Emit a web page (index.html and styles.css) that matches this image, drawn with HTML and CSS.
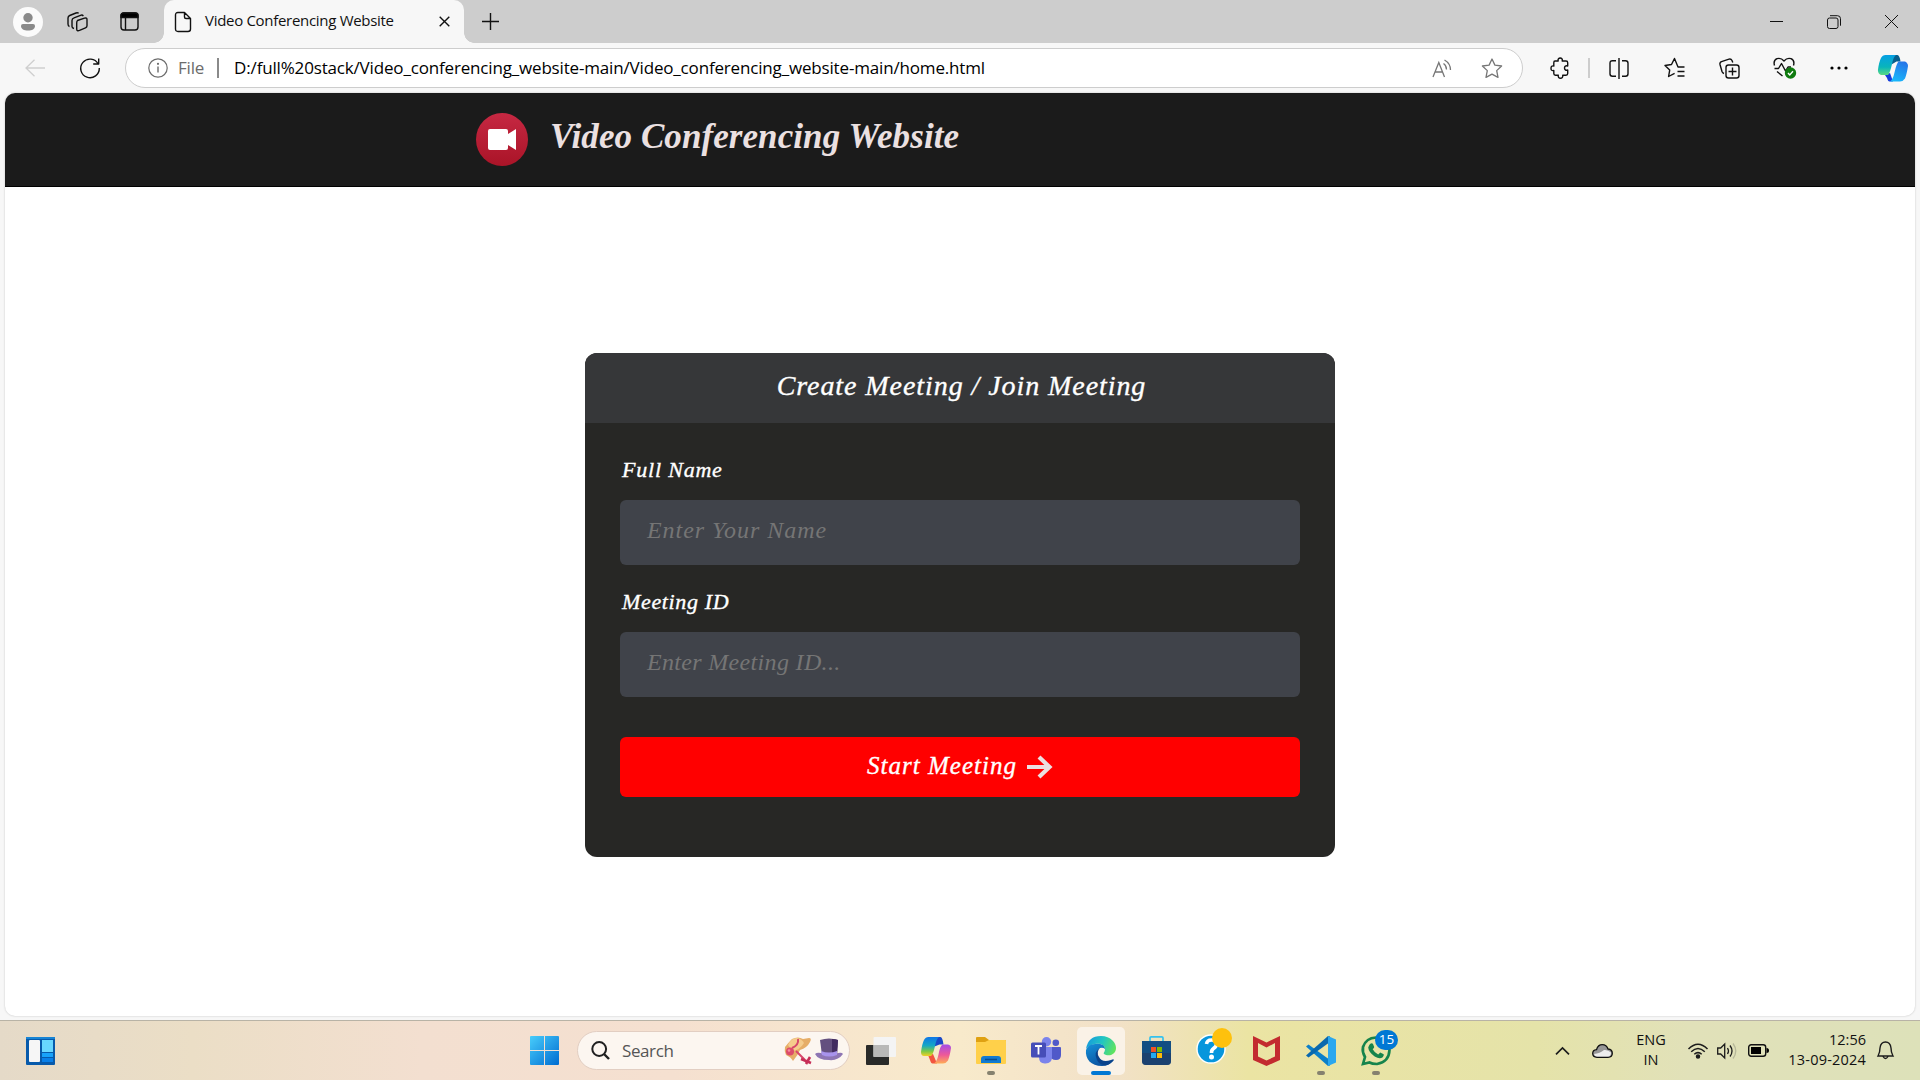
FILE: index.html
```html
<!DOCTYPE html>
<html lang="en">
<head>
<meta charset="utf-8">
<title>Video Conferencing Website</title>
<link rel="stylesheet" href="styles.css">
</head>
<body>
<div class="desktop">
  <div class="tabstrip">
    <div class="cell profile"><svg width="30" height="30" viewBox="0 0 30 30"><circle cx="15" cy="15" r="15" fill="#fbfbfb"/><circle cx="15" cy="10.7" r="4.7" fill="#8a8a8a"/><path d="M10 17h10q2 0 2 2c0 3-3 4.600-7 4.600s-7-1.600-7-4.600q0-2 2-2z" fill="#8a8a8a"/></svg></div>
    <div class="cell spaces"><svg width="22" height="22" viewBox="0 0 22 22" class="line"><path d="M10.500 9.500 17.500 7.200q2.500-.7 2.500 1.500v6q0 1.500-1.500 2.100l-6 2.600q-2.800 1-2.800-1.500v-6q0-1.700.8-2.400z"/><path d="M7 17.500q-2-.4-2-2V9.500q0-2 2-2.700l6.500-2.500q2-.7 2.800.8"/><path d="M2.500 15.500Q1 15 1 13V7q0-1.800 1.700-2.500L9 2q1.800-.7 2.600.4"/></svg></div>
    <div class="cell actions"><svg width="19" height="19" viewBox="0 0 19 19" class="line"><rect x="1" y="1" width="17" height="17" rx="3"/><path d="M1 5.500V3.500Q1 1 3.500 1h12Q18 1 18 3.500v2z" fill="#000"/><path d="M5.500 6v12"/></svg></div>
    <div class="tab">
      <svg width="18" height="22" viewBox="0 0 18 22" class="line"><path d="M4 1.500h6.500L16.500 7.500V18q0 2.500-2.500 2.500H4Q1.500 20.500 1.500 18V4Q1.500 1.500 4 1.500zM10.500 1.500v4.500q0 1.500 1.500 1.500h4.500"/></svg>
      <span class="tab-title">Video Conferencing Website</span>
      <svg width="11" height="11" viewBox="0 0 11 11" class="line"><path d="M.7.700 10.300 10.300M10.300.7.700 10.300"/></svg>
    </div>
    <div class="cell plus"><svg width="17" height="17" viewBox="0 0 17 17" class="line"><path d="M8.500 0v17M0 8.500h17"/></svg></div>
    <div class="window-buttons">
      <div class="cell"><svg width="13" height="13" viewBox="0 0 13 13" class="thin"><path d="M0 6.500h13"/></svg></div>
      <div class="cell"><svg width="14" height="14" viewBox="0 0 14 14" class="thin"><rect x=".5" y="3" width="10.500" height="10.500" rx="2"/><path d="M3 .7h7.500q3 0 3 3v7"/></svg></div>
      <div class="cell"><svg width="13" height="13" viewBox="0 0 13 13" class="thin"><path d="M0 0 13 13M13 0 0 13"/></svg></div>
    </div>
  </div>

  <div class="toolbar">
    <div class="cell back"><svg width="20" height="18" viewBox="0 0 20 18"><path d="M9.500.7 1 9l8.500 8.300M1 9h19" fill="none" stroke="#cfcfcf" stroke-width="1.300"/></svg></div>
    <div class="cell reload"><svg width="22" height="22" viewBox="0 0 22 22" class="line"><path d="M19.200 7A9.300 9.300 0 1 0 20.300 11M19.700 1.500V7h-5.500"/></svg></div>
    <div class="address">
      <svg width="20" height="20" viewBox="0 0 20 20" fill="none" stroke="#6c6c6c" stroke-width="1.200"><circle cx="10" cy="10" r="9.200"/><path d="M10 8.500v6" stroke-width="1.400"/><circle cx="10" cy="5.800" r=".5" fill="#6c6c6c"/></svg>
      <span class="scheme">File</span><span class="divider"></span>
      <span class="url">D:/full%20stack/Video_conferencing_website-main/Video_conferencing_website-main/home.html</span>
      <svg class="read" width="20" height="19" viewBox="0 0 20 19" fill="none" stroke="#767676" stroke-width="1.300"><path d="M1 18 6.800 3.500 12.500 18M3 13h7.500M11.500 4.500q3 2 3 6M12.500 1q6 3.500 6 10"/></svg>
      <svg class="star" width="22" height="21" viewBox="0 0 22 21" fill="none" stroke="#767676" stroke-width="1.300" stroke-linejoin="round"><path d="M11 1 13.900 7.100 20.600 8 15.700 12.600 17 19.400 11 16.100 5 19.400 6.300 12.600 1.400 8 8.100 7.100z"/></svg>
    </div>
    <div class="cell tool ext"><svg width="20" height="22" viewBox="0 0 20 22" class="line"><path d="M5 4h3.200C7.500 1.800 9 1 10.200 1s2.700.8 2 3H16q1.700 0 1.700 1.700V9c-2-.7-3.200.5-3.200 2s1.200 2.700 3.200 2v3.500q0 1.700-1.700 1.700h-3.300c.5 2-.8 3-2.200 3s-2.700-1-2.200-3H5.500q-1.700 0-1.700-1.700V13.500C1.500 14 1 12.700 1 11.200s1-2.700 2.800-2.200V5.700Q3.800 4 5 4z"/></svg></div>
    <span class="tool-divider"></span>
    <div class="cell tool"><svg width="20" height="21" viewBox="0 0 20 21" class="line"><path d="M10 0v21M7 2.700H3.500q-2.500 0-2.500 2.500v10.500q0 2.500 2.500 2.500H7M13 2.700h3.500q2.500 0 2.500 2.500v10.500q0 2.500-2.500 2.500H13"/></svg></div>
    <div class="cell tool"><svg width="21" height="20" viewBox="0 0 21 20" class="line"><path d="M20.500 9.500H14L10.500 1 7.500 7 1 8l4.700 4.600L4.600 19l6-3.200M13.500 14H20.500M13.500 18.500H20.500" transform="translate(0 -.5)"/></svg></div>
    <div class="cell tool"><svg width="21" height="21" viewBox="0 0 21 21" class="line"><rect x="7" y="7" width="13" height="13" rx="2.500"/><path d="M13.500 9.500v8M9.500 13.500h8M5 15.500Q3.500 15 3 13.500L1 6.500Q.5 4.500 2.500 3.700L10 1.200q2-.6 3 1.300l.8 2"/></svg></div>
    <div class="cell tool"><svg width="22" height="22" viewBox="0 0 22 22" class="line"><path d="M1.500 8.500Q0 3.500 4 1.700 8 .5 11 4q3-3.500 7-2.300 4 1.800 2.500 6.800M1.500 11.500h4l3-5 4 7.500 2.500-4h3M4 14.500 9.500 19"/><circle cx="17.500" cy="16" r="5.700" fill="#0f7b0f" stroke="none"/><path d="m15 16 1.800 1.900 3.200-3.600" stroke="#fff"/></svg></div>
    <div class="cell tool"><svg width="18" height="4" viewBox="0 0 18 4"><circle cx="2" cy="2" r="1.600"/><circle cx="9" cy="2" r="1.600"/><circle cx="16" cy="2" r="1.600"/></svg></div>
    <div class="cell copilot"><svg width="30" height="27" viewBox="0 0 30 27"><defs><linearGradient id="ca" x1="0" y1="0" x2="0" y2="1"><stop offset="0" stop-color="#069fe4"/><stop offset=".6" stop-color="#08b5bb"/><stop offset="1" stop-color="#5ada82"/></linearGradient><linearGradient id="cb" x1=".7" y1="0" x2=".3" y2="1"><stop offset="0" stop-color="#2575e8"/><stop offset="1" stop-color="#18b9fb"/></linearGradient></defs><path d="M14 0h5.500q2 0 3 6.500h-4l-5 3z" fill="#075e8c"/><path d="M7 20l5-2 3 8.500h-3.500Q10 26.500 9 23z" fill="#153ddb"/><path d="M7.500 0H18Q15.500 1.500 14 9q-2 9-4 11H3Q0 19-.1 15 1 7 3 3 4.500 0 7.500 0z" fill="url(#ca)"/><path d="M22 26.500H12q3-2 4.500-9Q18.500 8.500 20.500 6.500H27Q30 8 30 11q-1.200 8-3 12.500Q25 26.500 22 26.500z" fill="url(#cb)"/></svg></div>
  </div>

  <div class="viewport">
    <header class="site-header">
      <svg class="logo" width="52" height="53" viewBox="0 0 52 53"><defs><linearGradient id="lg" x1="0" y1="0" x2="0" y2="1"><stop offset="0" stop-color="#c62842"/><stop offset="1" stop-color="#aa1428"/></linearGradient></defs><ellipse cx="26" cy="26.500" rx="26" ry="26.500" fill="url(#lg)"/><path d="M14 16h16q2 0 2 2v3l8-5v21l-8-5v3q0 2-2 2H14q-2 0-2-2V18q0-2 2-2z" fill="#fff"/></svg>
      <h1 class="site-title">Video Conferencing Website</h1>
    </header>
    <main class="stage">
      <section class="card">
        <h2 class="card-head">Create Meeting / Join Meeting</h2>
        <form class="form">
          <label class="label">Full Name</label>
          <div class="field">Enter Your Name</div>
          <label class="label label-id">Meeting ID</label>
          <div class="field field-id">Enter Meeting ID...</div>
          <div class="submit"><span>Start Meeting</span><svg width="26" height="24" viewBox="0 0 26 24" fill="none" stroke="#ebe0e1" stroke-width="4.200"><path d="M0 12h22M12 2l10.500 10L12 22"/></svg></div>
        </form>
      </section>
    </main>
  </div>

  <div class="taskbar">
    <div class="task widgets"><svg width="29" height="28" viewBox="0 0 29 28"><rect width="29" height="28" rx="1" fill="#075aab"/><path d="M0 0h29v2H0z" fill="#1684d5"/><rect x="3" y="3" width="11" height="22" rx="1" fill="#f6f6f6"/><path d="M16 3h11v12H16z" fill="#68d7ff"/><path d="M16 16h11v4H16z" fill="#18a2fa"/><path d="M16 21h11v4H16z" fill="#087fe8"/></svg></div>
    <div class="task start"><svg width="29" height="29" viewBox="0 0 29 29"><defs><linearGradient id="wn" x1="0" y1="0" x2="1" y2="1"><stop offset="0" stop-color="#48cdfb"/><stop offset="1" stop-color="#006cd1"/></linearGradient></defs><path d="M1 0h13v14H0V1q0-1 1-1zM15 0h13q1 0 1 1v13H15zM0 15h14v14H1q-1 0-1-1zM15 15h14v13q0 1-1 1H15z" fill="url(#wn)"/></svg></div>
    <div class="search">
      <svg width="19" height="19" viewBox="0 0 19 19" fill="none" stroke="#202020" stroke-width="2"><circle cx="8.200" cy="8" r="6.900"/><path d="m13 13 5 5" stroke-width="2.400"/></svg>
      <span class="search-text">Search</span>
      <svg class="hats" width="58" height="28" viewBox="0 0 58 28"><path d="M0 10Q4 5 7 2q6-3 11 0l6-1q3 0 1 4-3 6-10 8-2 5-7 11-2-4-7-6-2-4-1-8z" fill="#e6ad67"/><path d="M3 8Q6 1 12 1q5 1 7 5-4 7-12 8z" fill="#f5cc8c"/><path d="M13 2q1 6-6 9M11 14l9 9" stroke="#d7476b" stroke-width="2" fill="none"/><circle cx="5" cy="14.500" r="4" fill="#dc4c6b"/><circle cx="4" cy="13.500" r="1.300" fill="#f58ea0"/><path d="m16 22 10 4M25 20l-4 7" stroke="#c72e57" stroke-width="2.600"/><path d="M35 3q9-3 18 0l-1 15q-8 3-15 0z" fill="#64507f"/><path d="M47 2q4 0 6 1l-1 15-5 1z" fill="#422c60"/><path d="M30 17q2-2 6-1 8 4 17 0 4-1 5 1-5 7-14 6-11 0-14-6z" fill="#8e76b4"/><path d="M36 14q8 3 16 0v4q-8 3-15 0z" fill="#a893ec"/></svg>
    </div>
    <div class="task"><svg width="30" height="28" viewBox="0 0 30 28"><rect y="8" width="23" height="20" rx="1" fill="#292a29"/><rect x="7.500" width="22.500" height="20" rx="1" fill="#f4f4f4"/><path d="M7.500 8H23v12H7.500z" fill="#b9b9b8"/></svg></div>
    <div class="task"><svg width="30" height="27" viewBox="0 0 30 27"><defs><linearGradient id="cc" x1="0" y1="0" x2="0" y2="1"><stop offset="0" stop-color="#0f76e8"/><stop offset=".45" stop-color="#16a7c4"/><stop offset=".75" stop-color="#7bc947"/><stop offset="1" stop-color="#f2cf25"/></linearGradient><linearGradient id="cd" x1="0" y1="0" x2="0" y2="1"><stop offset="0" stop-color="#a44be8"/><stop offset=".55" stop-color="#ee5998"/><stop offset="1" stop-color="#ffac55"/></linearGradient></defs><path d="M14 0h5.500q2 0 3 7.500h-4l-5 2z" fill="#1948c8"/><path d="M7 18l5-1 4 9.500h-4.500Q10 26.500 9 23z" fill="#f25540"/><path d="M7.500 0H18Q15.500 1.500 14 9q-2 9-4 10H3Q0 19 0 15 1 7 3 3 4.500 0 7.500 0z" fill="url(#cc)"/><path d="M22 26.500h-9q3-2 4.500-9Q19 9 21.500 7.500H27Q30 8 30 11q-1.200 8-3 12.500Q25 26.500 22 26.500z" fill="url(#cd)"/></svg></div>
    <div class="task running"><svg width="30" height="27" viewBox="0 0 30 27"><path d="M1 0h8l4 3h16q1 0 1 1v6H0V1q0-1 1-1z" fill="#dfa112"/><path d="M0 5h9l4-2h16q1 0 1 1v22q0 1-1 1H1q-1 0-1-1z" fill="#ffd04a"/><path d="M8 19h14q3 0 3 3v4H5v-4q0-3 3-3z" fill="#127bd1"/><path d="M9 22.500h12" stroke="#064e91" stroke-width="1.500"/></svg></div>
    <div class="task"><svg width="30" height="27" viewBox="0 0 30 27"><circle cx="15.500" cy="4.800" r="4.700" fill="#7b83eb"/><circle cx="24.800" cy="5.800" r="3.300" fill="#5059c9"/><path d="M18 10h11q1 0 1 1v7q0 5-5 5t-7-5z" fill="#5059c9"/><path d="M8 10h13v10q0 6-6.500 6.500T8 20z" fill="#7b83eb"/><rect y="5.500" width="15" height="15" rx="1.500" fill="#464eb8"/><path d="M4 9h7M7.500 9v8.500" stroke="#fff" stroke-width="1.800"/></svg></div>
    <div class="task active"><svg width="30" height="30" viewBox="0 0 30 30"><defs><linearGradient id="ea" x1="0" y1=".3" x2="1" y2=".6"><stop offset="0" stop-color="#169ade"/><stop offset=".5" stop-color="#22c6c1"/><stop offset="1" stop-color="#61e45c"/></linearGradient><linearGradient id="eb" x1="0" y1="0" x2=".6" y2="1"><stop offset="0" stop-color="#1592d9"/><stop offset="1" stop-color="#0b509e"/></linearGradient></defs><path d="M0 13Q2 0 15 0c10 0 15 7 15 12 0 7-8 9-12 6-1-1 1-2 1-5 0-4-5-6-10-5Q3 9 0 13z" fill="url(#ea)"/><path d="M0 14Q2 8 9 8c7-1 10 2 10 5q-2-2-5-1-5 3-2 10 3 8 15 2 2-1 0 1-4 5-11 5C5 30-1 23 0 14z" fill="url(#eb)"/><path d="M14 12q-7 4-3 12 3 6 10 5 3-1 6-4 2-3-2-1-9 3-12-3-3-5 1-9z" fill="#0a438b"/></svg></div>
    <div class="task"><svg width="29" height="29" viewBox="0 0 29 29"><path d="M8 7V2q0-1.200 1.200-1.200h10.600Q21 .8 21 2v5" fill="none" stroke="#35c2ee" stroke-width="1.700"/><path d="M0 5h29v20q0 4-4 4H4q-4 0-4-4z" fill="#124e83"/><path d="M0 17h29v8q0 4-4 4H4q-4 0-4-4z" fill="#1f3c66" opacity=".7"/><path d="M9 11h5v5H9z" fill="#f05224"/><path d="M15 11h5v5h-5z" fill="#7fba00"/><path d="M9 17h5v5H9z" fill="#24aaf0"/><path d="M15 17h5v5h-5z" fill="#ffba08"/></svg></div>
    <div class="task help"><svg width="38" height="38" viewBox="0 0 38 38"><circle cx="17" cy="22" r="14.700" fill="#fff"/><circle cx="17" cy="22" r="13.300" fill="#0796dc"/><path d="M12.500 17q.5-4 5-4 5 0 5 4 0 2.500-3 4.500-2.200 1.500-2 4.500" fill="none" stroke="#fff" stroke-width="3.600"/><circle cx="17.500" cy="30" r="2.500" fill="#fff"/><circle cx="28" cy="11" r="10" fill="#fec10d"/></svg></div>
    <div class="task"><svg width="27" height="30" viewBox="0 0 27 30"><path d="M0 0 13.500 6.500 27 0v24l-13.500 6L0 24zM5 7v13.500l8.500 4 8.500-4V7l-8.500 4.500z" fill="#c32b2f" fill-rule="evenodd"/></svg></div>
    <div class="task running"><svg width="30" height="30" viewBox="0 0 30 30"><path d="M0 10.500 2.500 8.500 24 24v5.500L22 30z" fill="#0b7fc9"/><path d="M0 19.500 2.500 21.500 24 6V.5L22 0z" fill="#0868ae"/><path d="M22 0 30 3.500v23L22 30z" fill="#2ba7ee"/></svg></div>
    <div class="task running chat"><svg width="30" height="30" viewBox="0 0 30 30"><path d="M2 28 4 21Q1 16 2 11 5 2 15 1.500 27 3 28.500 14 28 26 16 28 11 28 8.500 26.500z" fill="none" stroke="#16844c" stroke-width="2.700"/><path d="M9 8q2-1.500 3 0l1.200 3q0 1-1.500 2.300 2 3.800 5.500 5.200l2-2 3.500 1.800q.5 1-1 3-3 2.400-8-.8-6-4.200-6.500-9Q8 9 9 8z" fill="#16844c"/></svg><span class="badge">15</span></div>
    <div class="tray">
      <div class="cell chevron"><svg width="15" height="8" viewBox="0 0 15 8" fill="none" stroke="#1c1c1c" stroke-width="1.700"><path d="m1 7.300 6.500-6.300L14 7.300"/></svg></div>
      <div class="cell cloud"><svg width="21" height="14" viewBox="0 0 21 14"><path d="M5 13.300Q.7 13 .7 9.500T4.500 5.700Q6 .7 10.300.7T16 5q4.300.3 4.300 4.300 0 4-4.300 4z" fill="#979797" stroke="#111" stroke-width="1.300"/><path d="M2 10q6-.5 10-4 4-.5 7 2.500 0 4-3 4H5Q2.500 12.500 2 10z" fill="#ededed"/></svg></div>
      <div class="language"><span>ENG</span><span>IN</span></div>
      <div class="cell wifi"><svg width="20" height="16" viewBox="0 0 20 16" fill="none" stroke="#1c1c1c" stroke-width="1.500"><path d="M.5 6Q10-3.700 19.500 6M3.200 8.800q6.800-6.600 13.600 0M6.300 11.300q3.700-3.300 7.400 0"/><circle cx="10" cy="13.500" r="1.500" fill="#1c1c1c"/></svg></div>
      <div class="cell sound"><svg width="21" height="16" viewBox="0 0 21 16" fill="none" stroke="#1c1c1c" stroke-width="1.300"><path d="M.7 5h3l4-4v14l-4-4h-3zM10.500 5q2 3 0 6M13 2.500q4 5.500 0 11"/><path d="M16 .5q5.500 7.500 0 15" stroke="#b7b89a"/></svg></div>
      <div class="cell battery"><svg width="21" height="13" viewBox="0 0 21 13"><rect x=".7" y=".7" width="17" height="11.600" rx="2.500" fill="none" stroke="#111" stroke-width="1.400"/><path d="M3 3h10v7H3z"/><path d="M18.500 4q2.500 0 2.500 2.500T18.500 9z"/></svg></div>
      <div class="clock"><span>12:56</span><span class="date">13-09-2024</span></div>
      <svg class="bell" width="17" height="19" viewBox="0 0 17 19" fill="none" stroke="#1c1c1c" stroke-width="1.400"><path d="M1 15q2-3.500 2-8 .7-6 5.500-6T14 7q0 4.500 2 8zM6 15.500q2.500 4 5 0"/></svg>
    </div>
  </div>
</div>
</body>
</html>
```
FILE: styles.css
```css
* { box-sizing: border-box; }
body { margin: 0; overflow: hidden; font-family: "Open Sans", "Noto Sans", sans-serif; color: #111; }
svg { display: block; flex: none; overflow: visible; }
.desktop { width: 1920px; height: 1080px; display: flex; flex-direction: column; background: #f7f7f7; }
.line { fill: none; stroke: #111; stroke-width: 1.4; stroke-linejoin: round; }
.thin { fill: none; stroke: #111; stroke-width: 1; }
.cell { display: flex; align-items: center; justify-content: center; flex: none; }

.tabstrip { height: 43px; display: flex; align-items: center; background: #cdcdcd; flex: none; }
.profile { width: 56px; }
.spaces { width: 43px; }
.actions { width: 65px; padding-right: 4px; }
.tab { position: relative; width: 300px; height: 43px; padding: 0 14px 0 10px; display: flex; align-items: center; background: #f7f7f7; border-radius: 10px 10px 0 0; }
.tab::before, .tab::after { content: ""; position: absolute; bottom: 0; width: 10px; height: 10px; }
.tab::before { left: -10px; background: radial-gradient(circle at 0 0, transparent 9.5px, #f7f7f7 10px); }
.tab::after { right: -10px; background: radial-gradient(circle at 100% 0, transparent 9.5px, #f7f7f7 10px); }
.tab-title { flex: 1; margin-left: 13px; padding-bottom: 3px; font-size: 15px; letter-spacing: -.3px; white-space: nowrap; }
.plus { width: 52px; }
.window-buttons { display: flex; margin-left: auto; }
.window-buttons .cell { width: 57.5px; }

.toolbar { height: 50px; display: flex; align-items: center; flex: none; }
.back { width: 70px; }
.reload { width: 40px; }
.address { width: 1398px; height: 40px; margin-left: 15px; padding: 0 19px 0 22px; display: flex; align-items: center; background: #fff; border: 1px solid #cdcdcd; border-radius: 20px; }
.scheme { margin-left: 10px; padding-bottom: 2px; color: #6c6c6c; font-size: 17px; letter-spacing: -.2px; }
.divider { width: 2px; height: 20px; margin: 0 15px 0 13px; background: #8a8a8a; }
.url { flex: 1; padding-bottom: 2px; font-size: 17px; letter-spacing: -.167px; white-space: nowrap; color: #000; }
.star { margin-left: 29px; }
.tool { width: 55px; }
.ext { margin-left: 9px; }
.tool-divider { width: 2px; height: 20px; margin: 0 1px; background: #cdcdcd; }
.tool-divider ~ .tool { padding-left: 1px; }
.copilot { width: 53px; }

.viewport { width: 1910px; height: 923px; margin-left: 5px; display: flex; flex-direction: column; flex: none; background: #fff; border-radius: 10px; overflow: hidden; box-shadow: 0 0 2px #bdbdbd; }
.site-header { height: 94px; display: flex; align-items: center; padding-left: 471px; background: #1b1b1b; border-bottom: 1px solid #000; flex: none; }
.site-title { margin: 0 0 5px 22px; font: italic bold 35px "Liberation Serif", serif; letter-spacing: .08px; color: #ebe0e1; white-space: nowrap; }
.stage { flex: 1; display: flex; justify-content: center; align-items: flex-start; padding-top: 166px; }
.card { width: 750px; height: 504px; border-radius: 12px; overflow: hidden; background: #272725; color: #fff; font-family: "Liberation Serif", serif; font-style: italic; -webkit-text-stroke: .35px; }
.card-head { height: 70px; margin: 0; display: flex; align-items: center; justify-content: center; background: #363739; font-size: 28px; font-weight: 400; letter-spacing: .93px; padding: 0 0 4px 3px; }
.form { padding: 28px 35px; display: flex; flex-direction: column; }
.label { height: 40px; padding: 0 0 0 2px; font-size: 22px; line-height: 38px; letter-spacing: .8px; margin-bottom: 9px; }
.label-id { letter-spacing: .65px; }
.field { height: 65px; padding: 0 27px 4px; margin-bottom: 18px; display: flex; align-items: center; background: #40434a; border-radius: 6px; font-size: 24px; letter-spacing: .95px; color: #757575; -webkit-text-stroke: 0; }
.field-id { letter-spacing: .33px; }
.submit { height: 60px; margin-top: 22px; padding-bottom: 1px; display: flex; align-items: center; justify-content: center; gap: 10px; background: #f00; border-radius: 6px; font-size: 25px; letter-spacing: 1.03px; }
.submit span { padding-bottom: 2px; }

.taskbar { height: 60px; margin-top: 4px; display: flex; align-items: center; border-top: 1px solid #b8b3a6; background: linear-gradient(90deg, #e5dac8 0, #ebdec6 10%, #f3dfd0 22%, #f5e0d0 35%, #f8eacb 50%, #f2e1c8 58%, #ebe4a3 65%, #e5e3a9 80%, #e1e1b9 88%, #dde1b9 100%); }
.task { position: relative; width: 48px; height: 48px; margin-right: 7px; display: flex; align-items: center; justify-content: center; flex: none; }
.widgets { margin: 0 0 0 16px; }
.start { margin: 0 9px 0 456px; }
.search { width: 273px; height: 39px; margin-right: 7px; padding: 0 6px 0 13px; display: flex; align-items: center; background: #fcf6f0; border: 1px solid #e2cec2; border-radius: 20px; flex: none; }
.search-text { flex: 1; margin-left: 12px; font-size: 17px; letter-spacing: -.4px; color: #555; }
.active { background: #faf2e7; border-radius: 5px; }
.running::after, .active::after { content: ""; position: absolute; bottom: 0; width: 8px; height: 4px; border-radius: 2px; background: #85816f; }
.active::after { width: 20px; background: #0078d4; }
.badge { position: absolute; left: 23px; top: 3px; width: 23px; height: 20px; border-radius: 10px; background: #0078d4; color: #fff; font-size: 13.5px; line-height: 19px; text-align: center; }
.help svg { margin: -9px 0 0 4px; }
.tray { display: flex; align-items: center; margin-left: auto; }
.chevron { width: 40px; }
.cloud { width: 41px; }
.language { width: 56px; padding-bottom: 2px; display: flex; flex-direction: column; align-items: center; font-size: 14.5px; line-height: 20px; }
.wifi { width: 38px; }
.sound { width: 21px; }
.battery { width: 40px; }
.clock { width: 88px; padding-bottom: 2px; display: flex; flex-direction: column; align-items: flex-end; font-size: 14.5px; line-height: 20px; white-space: nowrap; }
.date { letter-spacing: .2px; }
.bell { margin: 0 26px 0 11px; }
```
